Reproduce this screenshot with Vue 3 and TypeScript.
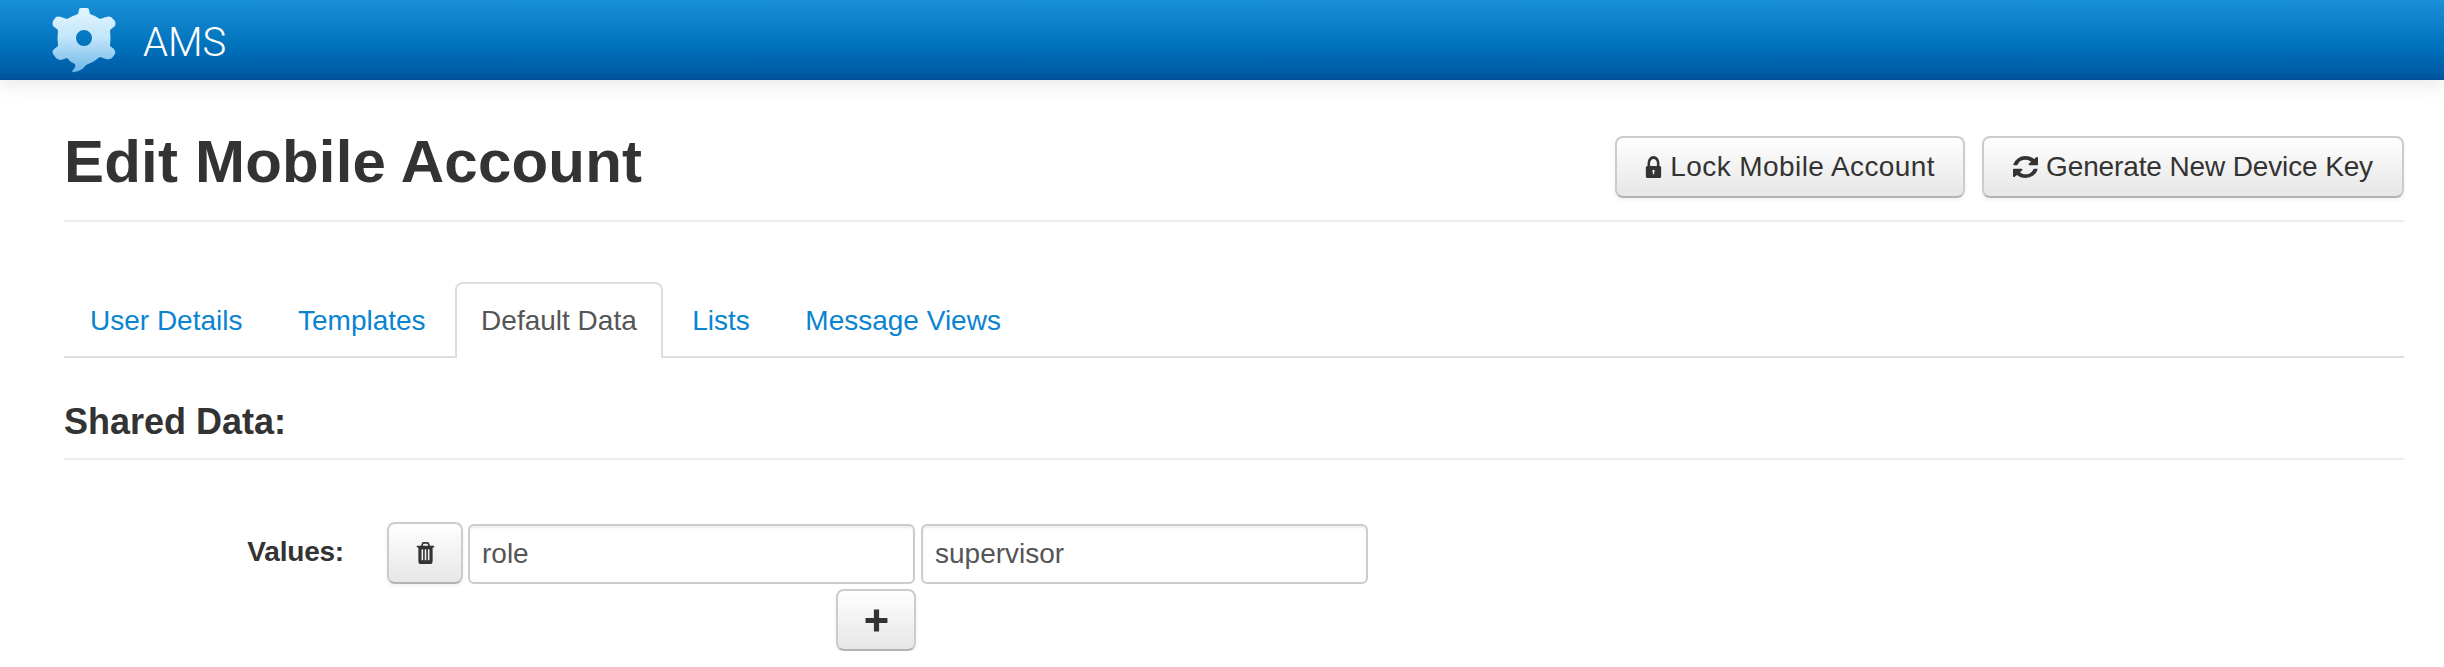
<script setup lang="ts">
import { ref } from 'vue'

const tabs = ['User Details', 'Templates', 'Default Data', 'Lists', 'Message Views']
const activeTab = ref('Default Data')
const key = ref('role')
const value = ref('supervisor')
</script>

<template>
  <header class="topbar">
    <svg class="logo" viewBox="0 0 64 65" width="64" height="65">
      <defs>
        <linearGradient id="gearFill" x1="0" y1="0" x2="0" y2="1">
          <stop offset="0" stop-color="#e3f5fe" />
          <stop offset="0.45" stop-color="#c3e6fa" />
          <stop offset="1" stop-color="#6fb7e8" />
        </linearGradient>
      </defs>
      <path
        fill="url(#gearFill)"
        fill-rule="evenodd"
        d="M27 2Q27 0 29 0H35Q37 0 37 2L38 6Q44 8 48 11L54 9Q57 8 59 9L63 13Q64 16 63 18L58 22Q59 30 58 38L62 41Q64 44 63 46L60 50Q57 52 54 51L48 49Q42 54 34 57Q30 63 22 64Q19 65 21 62Q24 59 23 56Q18 54 15 50L9 52Q6 52 4 50L1 46Q0 44 1 42L6 38Q5 30 6 22L1 18Q0 16 1 13L4 9Q6 8 9 9L15 11Q20 8 26 6ZM32 22A8 8 0 1 0 32 38A8 8 0 1 0 32 22Z"
      />
    </svg>
    <span class="brand">AMS</span>
  </header>

  <main class="page">
    <div class="page-head">
      <h1>Edit Mobile Account</h1>
      <div class="actions">
        <button class="btn lock">
          <svg class="icon" viewBox="256 128 1280 1408" preserveAspectRatio="none">
            <path d="M640 768h512v-192q0-106-75-181t-181-75-181 75-75 181v192zm832 96v576q0 40-28 68t-68 28h-960q-40 0-68-28t-28-68v-576q0-40 28-68t68-28h32v-192q0-184 132-316t316-132 316 132 132 316v192h32q40 0 68 28t28 68z" />
            <path fill="#f2f2f2" d="M896 1010a90 90 0 0 1 50 165v115h-100v-115a90 90 0 0 1 50-165z" />
          </svg>
          Lock Mobile Account
        </button>
        <button class="btn generate">
          <svg class="icon" viewBox="128 128 1536 1536" preserveAspectRatio="none">
            <path d="M1639 1056q0 5-1 7-64 268-268 434.5t-478 166.5q-146 0-282.5-55t-243.5-157l-129 129q-19 19-45 19t-45-19-19-45v-448q0-26 19-45t45-19h448q26 0 45 19t19 45-19 45l-137 137q71 66 161 102t187 36q134 0 250-65t186-179q11-17 53-117 8-23 30-23h192q13 0 22.5 9.5t9.5 22.5zm25-800v448q0 26-19 45t-45 19h-448q-26 0-45-19t-19-45 19-45l138-138q-148-137-349-137-134 0-250 65t-186 179q-11 17-53 117-8 23-30 23h-199q-13 0-22.5-9.5t-9.5-22.5v-7q65-268 270-434.5t480-166.5q146 0 284 55.5t245 156.5l130-129q19-19 45-19t45 19 19 45z" />
          </svg>
          Generate New Device Key
        </button>
      </div>
    </div>

    <ul class="tabs">
      <li v-for="tab in tabs" :key="tab" class="tab" :class="{ active: tab === activeTab }" @click="activeTab = tab">
        {{ tab }}
      </li>
    </ul>

    <h2>Shared Data:</h2>

    <div class="form-row">
      <label>Values:</label>
      <div class="fields">
        <div class="pair">
          <button class="btn square trash">
            <svg class="icon" viewBox="128 128 1536 1536" preserveAspectRatio="none">
              <path d="M704 1376v-704q0-14-9-23t-23-9h-64q-14 0-23 9t-9 23v704q0 14 9 23t23 9h64q14 0 23-9t9-23zm256 0v-704q0-14-9-23t-23-9h-64q-14 0-23 9t-9 23v704q0 14 9 23t23 9h64q14 0 23-9t9-23zm256 0v-704q0-14-9-23t-23-9h-64q-14 0-23 9t-9 23v704q0 14 9 23t23 9h64q14 0 23-9t9-23zm-544-992h448l-48-117q-7-9-17-11h-317q-10 2-17 11zm928 32v64q0 14-9 23t-23 9h-96v948q0 83-47 143.5t-113 60.5h-832q-66 0-113-58.5t-47-141.5v-952h-96q-14 0-23-9t-9-23v-64q0-14 9-23t23-9h309l70-167q15-37 54-63t79-26h320q40 0 79 26t54 63l70 167h309q14 0 23 9t9 23z" />
            </svg>
          </button>
          <input v-model="key" type="text" />
          <input v-model="value" class="second" type="text" />
        </div>
        <div class="add-row">
          <button class="btn square plus">
            <svg class="icon" viewBox="0 0 24 24">
              <path d="M9.5 1.5h5v8h8v5h-8v8h-5v-8h-8v-5h8z" />
            </svg>
          </button>
        </div>
      </div>
    </div>
  </main>
</template>

<style scoped>
.topbar {
  height: 80px;
  box-sizing: border-box;
  padding: 8px 0 0 52px;
  display: flex;
  align-items: flex-start;
  background: linear-gradient(to bottom, #1a90d9, #0071bb 60%, #00559f);
  border-bottom: 1px solid #004f94;
  box-shadow: 0 4px 20px rgba(0, 0, 0, 0.1);
}

.logo {
  display: block;
}

.brand {
  margin: 12px 0 0 27px;
  font-family: Roboto, "Liberation Sans", sans-serif;
  font-weight: 300;
  font-size: 40px;
  line-height: 46px;
  color: #fff;
}

.page {
  padding: 0 40px 0 64px;
}

.page-head {
  height: 142px;
  box-sizing: border-box;
  padding-top: 56px;
  display: flex;
  justify-content: space-between;
  align-items: flex-start;
  border-bottom: 2px solid #eee;
}

h1 {
  margin: -4px 0 0;
  font-size: 60px;
  line-height: 60px;
  font-weight: 700;
  letter-spacing: 0.2px;
  color: #333;
}

.actions {
  display: flex;
  gap: 17px;
}

.btn {
  height: 62px;
  box-sizing: border-box;
  padding: 0 27px;
  display: flex;
  align-items: center;
  justify-content: center;
  gap: 8px;
  font-family: "Liberation Sans", Arial, sans-serif;
  font-size: 28px;
  color: #333;
  background: linear-gradient(to bottom, #fff, #e6e6e6);
  border: 2px solid #ccc;
  border-bottom-color: #b3b3b3;
  border-radius: 8px;
  box-shadow: 0 2px 4px rgba(0, 0, 0, 0.06);
}

.icon {
  fill: #333;
  flex: none;
}

.lock {
  padding: 0 28px;
  letter-spacing: 0.42px;
}

.lock .icon {
  width: 17px;
  height: 22px;
}

.generate {
  padding: 0 29px;
  letter-spacing: -0.13px;
}

.generate .icon {
  width: 25px;
  height: 22px;
}

.tabs {
  list-style: none;
  margin: 60px 0 0;
  padding: 0;
  height: 74px;
  display: flex;
  gap: 3.5px;
  border-bottom: 2px solid #ddd;
}

.tab {
  height: 76px;
  box-sizing: border-box;
  padding: 0 24px;
  font-size: 28px;
  line-height: 74px;
  color: #0a84d0;
  border: 2px solid transparent;
  border-bottom: none;
  border-radius: 8px 8px 0 0;
}

.tab.active {
  color: #555;
  background: #fff;
  border-color: #ddd;
}

h2 {
  margin: 0;
  height: 102px;
  box-sizing: border-box;
  padding-top: 44px;
  font-size: 36px;
  line-height: 40px;
  font-weight: 700;
  color: #333;
  border-bottom: 2px solid #eee;
}

.form-row {
  margin-top: 62px;
  display: flex;
  align-items: flex-start;
}

label {
  width: 280px;
  padding-top: 14px;
  text-align: right;
  font-size: 28px;
  line-height: 32px;
  font-weight: 700;
  letter-spacing: -0.2px;
  color: #333;
}

.fields {
  margin-left: 43px;
}

.pair {
  display: flex;
  align-items: flex-start;
  gap: 5px;
}

.square {
  padding: 0;
}

.trash {
  width: 76px;
}

.plus {
  width: 80px;
}

.trash .icon {
  width: 19px;
  height: 22px;
}

.plus .icon {
  width: 25px;
  height: 25px;
}

input {
  width: 447px;
  height: 60px;
  margin-top: 2px;
  box-sizing: border-box;
  padding: 0 12px;
  font-family: "Liberation Sans", Arial, sans-serif;
  font-size: 28px;
  color: #555;
  background: #fff;
  border: 2px solid #ccc;
  border-radius: 6px;
  box-shadow: inset 0 2px 2px rgba(0, 0, 0, 0.07);
  outline: none;
}

.second {
  margin-left: 1px;
}

.add-row {
  margin-top: 5px;
  padding-left: 449px;
}
</style>

<style>
body {
  font-family: "Liberation Sans", Arial, sans-serif;
  background: #fff;
}
</style>
